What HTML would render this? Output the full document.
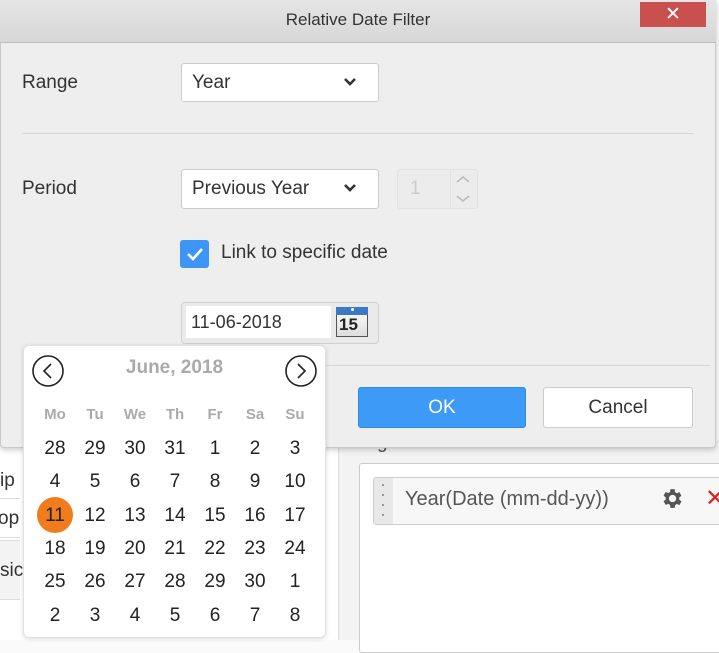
<!DOCTYPE html>
<html><head><meta charset="utf-8"><style>
*{box-sizing:border-box;margin:0;padding:0}
body{width:719px;height:640px;overflow:hidden;background:#fafafa;font-family:"Liberation Sans",sans-serif;position:relative;color:#333}
.a{position:absolute}
</style></head><body>
<div class="a" style="left:0;top:440px;width:340px;height:200px;background:#fff"></div>
<div class="a" style="left:0;top:463px;width:20px;height:36px;border-bottom:1px solid #ddd;font-size:19px;line-height:36px;color:#333">ip</div>
<div class="a" style="left:-2px;top:500px;width:22px;height:38px;border-bottom:1px solid #ddd;font-size:19px;line-height:38px">op</div>
<div class="a" style="left:0;top:540px;width:20px;height:60px;background:#f3f3f3;border-top:1px solid #ddd;border-bottom:1px solid #ddd;font-size:19px;line-height:60px">sic</div>
<div class="a" style="left:338px;top:440px;width:20px;height:200px;background:#f3f3f3;border-left:1px solid #ddd"></div>
<div class="a" style="left:358px;top:440px;width:361px;height:200px;background:#f3f3f3"></div>
<div class="a" style="left:358px;top:432px;font-size:19px;color:#555">Arguments</div>
<div class="a" style="left:359px;top:463px;width:370px;height:190px;background:#fff;border:1px solid #ccc;border-radius:3px"></div>
<div class="a" style="left:373px;top:477px;width:360px;height:48px;background:#f7f7f7;border:1px solid #ccc;border-radius:3px"></div>
<div class="a" style="left:374px;top:478px;width:19px;height:46px;background:#e8e8e8"></div>
<div class="a" style="left:382px;top:484px;width:2px;height:34px;background:repeating-linear-gradient(#999 0 2px,transparent 2px 10px)"></div>
<div class="a" style="left:405px;top:488px;font-size:20px;color:#555">Year(Date (mm-dd-yy))</div>
<svg class="a" style="left:659px;top:486px" width="25" height="25" viewBox="0 0 24 24"><path fill="#555" d="M19.4 13a7.5 7.5 0 0 0 0-2l2.1-1.6-2-3.5-2.5 1a7 7 0 0 0-1.7-1L15 3h-4l-.4 2.7a7 7 0 0 0-1.7 1l-2.5-1-2 3.5L6.5 11a7.5 7.5 0 0 0 0 2l-2.1 1.6 2 3.5 2.5-1a7 7 0 0 0 1.7 1L11 21h4l.4-2.7a7 7 0 0 0 1.7-1l2.5 1 2-3.5zM13 15.5a3.5 3.5 0 1 1 0-7 3.5 3.5 0 0 1 0 7z"/></svg>
<div class="a" style="left:705px;top:484px;font-size:24px;color:#d22">✕</div>

<div class="a" style="left:0;top:0;width:716px;height:448px;background:#eeeeee;border:1px solid #c8c8c8;border-radius:0 0 4px 4px;box-shadow:0 2px 6px rgba(0,0,0,.2)"></div>
<div class="a" style="left:0;top:0;width:716px;height:43px;background:linear-gradient(#e6e5e6,#d8d7d8);border-bottom:1px solid #bdbdbd;text-align:center;font-size:17px;line-height:40px;color:#333">Relative Date Filter</div>
<div class="a" style="left:640px;top:2px;width:66px;height:25px;background:#c9504f;color:#fff;text-align:center;font-size:19px;line-height:25px">✕</div>

<div class="a" style="left:22px;top:72px;font-size:19px">Range</div>
<div class="a" style="left:181px;top:63px;width:198px;height:39px;background:#fff;border:1px solid #ccc;border-radius:3px;font-size:19px;line-height:37px;padding-left:10px">Year</div>
<svg class="a" style="left:343px;top:77px" width="14" height="10"><path d="M2 2l5 5 5-5" stroke="#333" stroke-width="2.6" fill="none"/></svg>
<div class="a" style="left:22px;top:133px;width:671px;height:1px;background:#d6d6d6"></div>

<div class="a" style="left:22px;top:178px;font-size:19px">Period</div>
<div class="a" style="left:181px;top:169px;width:198px;height:40px;background:#fff;border:1px solid #ccc;border-radius:3px;font-size:19px;line-height:38px;padding-left:10px">Previous Year</div>
<svg class="a" style="left:343px;top:183px" width="14" height="10"><path d="M2 2l5 5 5-5" stroke="#333" stroke-width="2.6" fill="none"/></svg>
<div class="a" style="left:397px;top:169px;width:81px;height:40px;border:1px solid #e2e2e2;border-radius:3px;background:#ececec"></div>
<div class="a" style="left:450px;top:170px;width:1px;height:38px;background:#e2e2e2"></div>
<div class="a" style="left:410px;top:178px;font-size:19px;color:#ccc">1</div>
<svg class="a" style="left:455px;top:174px" width="16" height="30"><path d="M2 8l6-5 6 5M2 22l6 5 6-5" stroke="#bbb" stroke-width="1.6" fill="none"/></svg>

<div class="a" style="left:180px;top:240px;width:29px;height:28px;background:#3d95f5;border-radius:3px"></div>
<svg class="a" style="left:180px;top:240px" width="29" height="28"><path d="M8 14l5 5 9-10" stroke="#fff" stroke-width="2.6" fill="none"/></svg>
<div class="a" style="left:221px;top:242px;font-size:19px">Link to specific date</div>

<div class="a" style="left:181px;top:302px;width:198px;height:42px;border:1px solid #d0d0d0;border-radius:4px;background:#eaeaea"></div>
<div class="a" style="left:186px;top:306px;width:145px;height:32px;background:#fff;font-size:18px;line-height:32px;padding-left:5px">11-06-2018</div>
<div class="a" style="left:336px;top:307px;width:32px;height:30px;border:1px solid #555;background:linear-gradient(#fff,#ddd)"></div>
<div class="a" style="left:336px;top:307px;width:32px;height:8px;background:#3a78c8"></div>
<div class="a" style="left:351px;top:308px;width:3px;height:3px;background:#fff;border-radius:50%"></div>
<div class="a" style="left:339px;top:315px;font-size:17px;font-weight:bold;color:#222">15</div>

<div class="a" style="left:320px;top:365px;width:390px;height:1px;background:#d6d6d6"></div>
<div class="a" style="left:358px;top:387px;width:168px;height:41px;background:#3d9bf7;border:1px solid #2f8be6;border-radius:3px;color:#fff;font-size:19px;text-align:center;line-height:39px">OK</div>
<div class="a" style="left:543px;top:387px;width:150px;height:41px;background:#fff;border:1px solid #ccc;border-radius:3px;font-size:19px;text-align:center;line-height:39px">Cancel</div>

<div class="a" style="left:23px;top:345px;width:303px;height:293px;background:#fff;border:1px solid #e2e2e2;border-radius:6px;box-shadow:0 1px 4px rgba(0,0,0,.15)"></div>
<div class="a" style="left:23px;top:357px;width:303px;text-align:center;font-size:19px;font-weight:bold;color:#aaa">June, 2018</div>
<svg class="a" style="left:32px;top:355px" width="34" height="34"><circle cx="16" cy="16" r="15" stroke="#222" stroke-width="1.6" fill="none"/><path d="M19 9l-7 7 7 7" stroke="#222" stroke-width="1.6" fill="none"/></svg>
<svg class="a" style="left:285px;top:355px" width="34" height="34"><circle cx="16" cy="16" r="15" stroke="#222" stroke-width="1.6" fill="none"/><path d="M13 9l7 7-7 7" stroke="#222" stroke-width="1.6" fill="none"/></svg>
<div class="a" style="left:37px;top:497px;width:36px;height:36px;border-radius:50%;background:#f07c1e"></div>
<div id="cal"></div>
<script>
var h='',days=['Mo','Tu','We','Th','Fr','Sa','Su'];
for(var i=0;i<7;i++)h+='<div class="a" style="left:'+(35+i*40)+'px;top:406px;width:40px;text-align:center;font-size:15px;font-weight:bold;color:#aaa">'+days[i]+'</div>';
var d=[28,29,30,31,1,2,3];for(var n=4;n<=30;n++)d.push(n);for(n=1;n<=8;n++)d.push(n);
for(i=0;i<42;i++){var r=Math.floor(i/7),c=i%7;h+='<div class="a" style="left:'+(35+c*40)+'px;top:'+(438+r*33.3)+'px;width:40px;text-align:center;font-size:19px;color:#222">'+d[i]+'</div>';}
document.getElementById('cal').innerHTML=h;
</script>
</body></html>
